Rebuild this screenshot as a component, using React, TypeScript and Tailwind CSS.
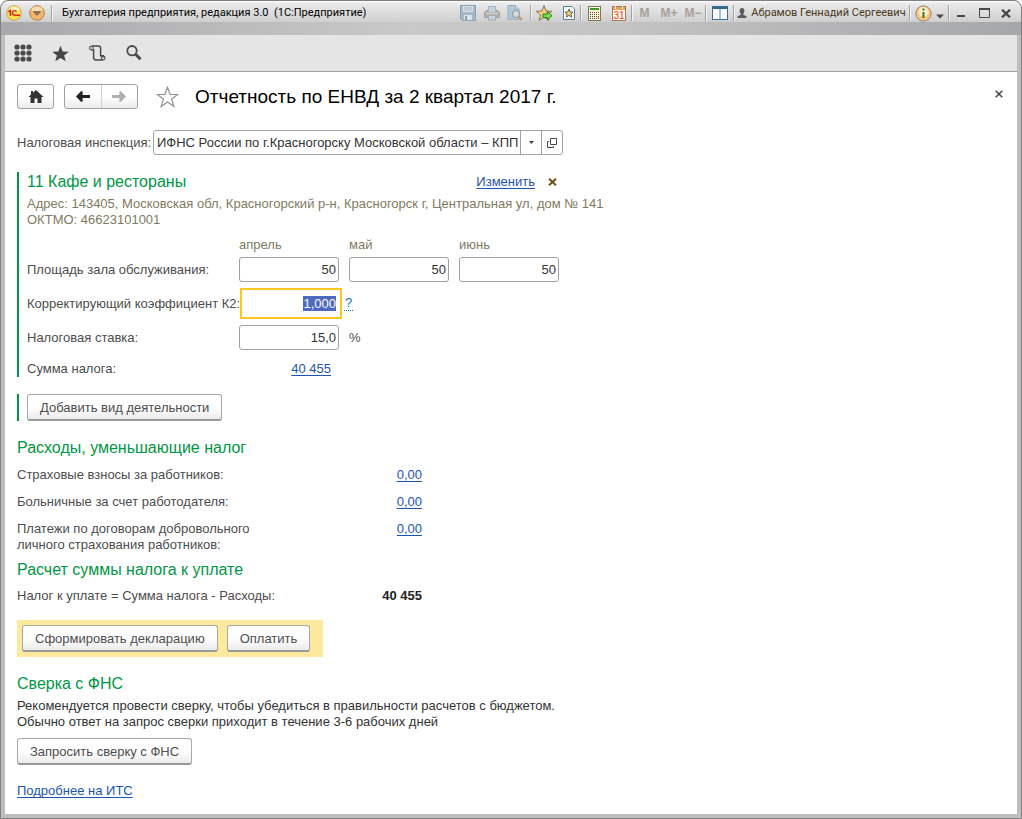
import { useEffect, useRef } from "react";
import type { ReactNode } from "react";

const STAR = "M8 0.6 L10.1 6 L15.8 6.3 L11.4 9.9 L12.9 15.4 L8 12.3 L3.1 15.4 L4.6 9.9 L0.2 6.3 L5.9 6 Z";

function Separator() {
  return <span className="h-4 w-px shrink-0 bg-[#a2a2a2] shadow-[1px_0_0_#f4f4f4]" />;
}

function BarButton({ label, className, children }: { label: string; className: string; children: ReactNode }) {
  return (
    <button type="button" aria-label={label} className={`flex h-5 shrink-0 items-center justify-center ${className}`}>
      {children}
    </button>
  );
}

function SaveIcon() {
  return (
    <svg width="16" height="16" viewBox="0 0 16 16">
      <path d="M0.5 0.5H15.5V15.5H2L0.5 14Z" fill="#a3b9c8" stroke="#88a3b5" />
      <rect x="3" y="1" width="10" height="6" fill="#d9e0e4" />
      <path d="M4 3H12M4 5H12" stroke="#a5b4be" />
      <rect x="4" y="10" width="8" height="5" fill="#dde3e7" />
      <rect x="5" y="11" width="2" height="4" fill="#8ba4b5" />
    </svg>
  );
}

function PrintIcon() {
  return (
    <svg width="16" height="16" viewBox="0 0 16 16">
      <path d="M2.5 5.5H13.5L15.5 8V12.5H0.5V8Z" fill="#b8b2ac" stroke="#a39d98" />
      <rect x="4.5" y="1.5" width="7" height="6" fill="#c3d3de" stroke="#a7b5c0" />
      <rect x="4.5" y="10.5" width="7" height="4.5" fill="#c3d3de" stroke="#a5abb1" />
      <path d="M2 8.5H14" stroke="#d9d4cf" />
    </svg>
  );
}

function PreviewIcon() {
  return (
    <svg width="16" height="16" viewBox="0 0 16 16">
      <path d="M1 0.5H8.5L12 4V14.5H1Z" fill="#b0c8d7" stroke="#9ab0bf" />
      <path d="M8.5 0.5V4H12" fill="#e2e9ed" stroke="#9ab0bf" />
      <circle cx="9" cy="9" r="3.5" fill="#cfdbe2" stroke="#a09c98" strokeWidth="1.2" />
      <path d="M11.6 11.6L15 15" stroke="#b39c90" strokeWidth="2.4" />
    </svg>
  );
}

function StarArrowIcon() {
  return (
    <svg width="17" height="16" viewBox="0 0 17 16">
      <path d={STAR} fill="#f7cf7c" stroke="#85765c" />
      <path d="M7 9H11.5V6.5L16 10.7L11.5 15V12.5H7Z" fill="#7ddb52" stroke="#27801c" />
    </svg>
  );
}

function PageStarIcon() {
  return (
    <svg width="14" height="16" viewBox="0 0 14 16">
      <path d="M1.5 1.5H10L12.5 4V14.5H1.5Z" fill="#f8fbfd" stroke="#56829b" />
      <path d="M7 4L8.2 6.9L11 7.1L8.9 9.1L9.6 12L7 10.4L4.4 12L5.1 9.1L3 7.1L5.8 6.9Z" fill="#f7cf74" stroke="#5f5443" strokeWidth="0.9" />
    </svg>
  );
}

function CalculatorIcon() {
  return (
    <svg width="13" height="15" viewBox="0 0 13 15">
      <rect x="0.5" y="0.5" width="12" height="14" fill="#fdf6d8" stroke="#7d7560" />
      <rect x="2" y="2" width="9" height="2" fill="#399b2a" />
      <path d="M2 6.5H10M2 8.5H10M2 10.5H10M2 12.5H10" stroke="#4b463a" strokeDasharray="1 1" />
      <path d="M10.5 6V7M10.5 8V9M10.5 10V13" stroke="#e2442a" />
    </svg>
  );
}

function CalendarIcon() {
  return (
    <svg width="14" height="16" viewBox="0 0 14 16">
      <rect x="0.5" y="1.5" width="13" height="14" fill="#fff7ea" stroke="#9d7a5a" />
      <rect x="1" y="2" width="12" height="3" fill="#e7a15c" />
      <path d="M3.5 1V4M10.5 1V4" stroke="#fff3e0" />
      <text x="7" y="13.5" textAnchor="middle" fontSize="10" fill="#e23a1c" fontFamily="Liberation Sans, sans-serif">
        31
      </text>
    </svg>
  );
}

function PanelsIcon() {
  return (
    <svg width="16" height="14" viewBox="0 0 16 14">
      <rect x="0.5" y="0.5" width="15" height="13" fill="#f6fafc" stroke="#40718d" />
      <rect x="1" y="1" width="14" height="2" fill="#2d6888" />
      <path d="M8 3V13" stroke="#5a89a2" />
    </svg>
  );
}

function TitleBar() {
  return (
    <header className="flex h-[34px] items-start rounded-t-lg bg-[linear-gradient(to_bottom,#fbfbfb_0px,#e9e9e9_3px,#cfcfcf_21px,transparent_21px),linear-gradient(to_right,#a9a9ac,#c9c9c9_40%,#c4c4c4_60%,#a6a7aa)] px-1 pt-0.5 font-[Roboto,sans-serif] text-[11px] leading-5 text-black">
      <BarButton label="1С" className="w-[18px]">
        <svg width="16" height="16" viewBox="0 0 16 16">
          <circle cx="8" cy="8" r="7.3" fill="#fbdd51" stroke="#caa85c" />
          <ellipse cx="8" cy="4.5" rx="5.5" ry="3" fill="#fff2b0" />
          <path d="M2.3 6.6L4.4 5.4V10.8" fill="none" stroke="#d8231b" strokeWidth="1.6" />
          <path d="M10.6 6.6A2.3 2.3 0 1 0 8.7 10.2H14" fill="none" stroke="#d8231b" strokeWidth="1.4" />
        </svg>
      </BarButton>
      <BarButton label="Главное меню" className="ml-1.5 w-4">
        <svg width="16" height="16" viewBox="0 0 16 16">
          <circle cx="8" cy="8" r="7.3" fill="#f5b868" stroke="#a98558" />
          <ellipse cx="8" cy="4.6" rx="5.6" ry="3.2" fill="#fbdcae" />
          <path d="M3.6 6.2H12.4L8 10.8Z" fill="#6b5237" />
          <path d="M5.4 7.2H10.6L8 9.8Z" fill="#fff" opacity="0.3" />
        </svg>
      </BarButton>
      <div className="ml-1.5 flex h-5 items-center">
        <Separator />
      </div>
      <span className="ml-2.5 whitespace-pre">Бухгалтерия предприятия, редакция 3.0  (1С:Предприятие)</span>
      <div className="ml-auto flex h-5 items-center">
        <BarButton label="Сохранить" className="w-6"><SaveIcon /></BarButton>
        <BarButton label="Печать" className="w-6"><PrintIcon /></BarButton>
        <BarButton label="Просмотр" className="w-[22px]"><PreviewIcon /></BarButton>
        <span className="w-1" />
        <Separator />
        <BarButton label="Добавить в избранное" className="w-[27px]"><StarArrowIcon /></BarButton>
        <BarButton label="Избранное" className="w-[22px]"><PageStarIcon /></BarButton>
        <Separator />
        <BarButton label="Калькулятор" className="w-[26px]"><CalculatorIcon /></BarButton>
        <BarButton label="Календарь" className="w-6"><CalendarIcon /></BarButton>
        <Separator />
        <div className="flex font-['Liberation_Sans',sans-serif] text-[12px] font-bold text-[#a89f98]">
          <button type="button" className="h-5 w-[25px]">M</button>
          <button type="button" className="h-5 w-6">M+</button>
          <button type="button" className="h-5 w-6">M−</button>
        </div>
        <Separator />
        <BarButton label="Панели" className="w-[27px]"><PanelsIcon /></BarButton>
        <Separator />
        <button type="button" className="flex h-5 w-[175px] items-center justify-center gap-1 whitespace-nowrap text-[#47391a]">
          <svg width="10" height="10" viewBox="0 0 10 10" fill="#5a5a5a">
            <ellipse cx="5" cy="3" rx="2.4" ry="3" />
            <path d="M0.5 10V8.2L3.8 6.8V5H6.2V6.8L9.5 8.2V10Z" />
          </svg>
          Абрамов Геннадий Сергеевич
        </button>
        <Separator />
        <BarButton label="Информация" className="ml-1 w-[18px]">
          <svg width="17" height="17" viewBox="0 0 17 17">
            <circle cx="8.5" cy="8.5" r="7.6" fill="#f6c67c" stroke="#8f8576" />
            <circle cx="8.5" cy="7" r="5" fill="#fdebc9" />
            <path d="M8.5 3.5V5.5M8.5 7V13" stroke="#2f7d2a" strokeWidth="2" />
          </svg>
        </BarButton>
        <BarButton label="Ещё" className="w-4 pt-1.5">
          <svg width="8" height="5" viewBox="0 0 8 5"><path d="M0 0.5H8L4 4.5Z" fill="#4a4a4a" /></svg>
        </BarButton>
        <Separator />
        <BarButton label="Свернуть" className="w-6 pt-1.5">
          <svg width="8" height="3" viewBox="0 0 8 3"><rect width="8" height="2" fill="#4a4a4a" /></svg>
        </BarButton>
        <BarButton label="Развернуть" className="w-[22px]">
          <svg width="11" height="10" viewBox="0 0 11 10"><path d="M0.5 1H10.5V9.5H0.5Z" fill="none" stroke="#4a4a4a" /><rect width="11" height="2" fill="#4a4a4a" /></svg>
        </BarButton>
        <BarButton label="Закрыть" className="w-[22px]">
          <svg width="10" height="9" viewBox="0 0 10 9"><path d="M1 0.7L9 8.3M9 0.7L1 8.3" stroke="#454545" strokeWidth="2.3" /></svg>
        </BarButton>
      </div>
    </header>
  );
}

function Toolbar() {
  const dots = [3, 9, 15];
  return (
    <nav className="flex h-[37px] items-center border-b border-[#a0a0a0] bg-[#e5e5e5] pl-[9px]">
      <button type="button" aria-label="Меню" className="w-[18px]">
        <svg width="18" height="18" viewBox="0 0 18 18" fill="#4a4a4a">
          {dots.map((y) => dots.map((x) => <circle key={`${x}-${y}`} cx={x} cy={y} r="2.6" />))}
        </svg>
      </button>
      <button type="button" aria-label="Избранное" className="ml-5 w-[17px]">
        <svg width="17" height="17" viewBox="0 0 16 16" fill="#454545"><path d={STAR} /></svg>
      </button>
      <button type="button" aria-label="История" className="ml-5 w-[17px]">
        <svg width="17" height="16" viewBox="0 0 17 16" fill="none" stroke="#4a4a4a" strokeWidth="1.5">
          <path d="M2.5 0.9H9.2Q11.6 0.9 11.6 3V10.7H14.2V12.5" />
          <path d="M2.6 5.1H4.6V12.5Q4.6 14.9 7 14.9H14" />
          <circle cx="2.4" cy="3" r="1.8" strokeWidth="1.1" />
          <circle cx="14.2" cy="12.9" r="1.8" strokeWidth="1.1" />
        </svg>
      </button>
      <button type="button" aria-label="Поиск" className="ml-5 w-4">
        <svg width="16" height="16" viewBox="0 0 16 16" fill="none" stroke="#4a4a4a">
          <circle cx="6" cy="5.7" r="4.7" strokeWidth="1.8" />
          <path d="M9.6 9.3L14.5 14.2" strokeWidth="3" />
        </svg>
      </button>
    </nav>
  );
}

function PageHeader() {
  return (
    <div className="flex h-[25px] items-center">
      <button
        type="button"
        aria-label="Начальная страница"
        className="flex h-[25px] w-[37px] items-center justify-center rounded-[3px] border border-[#a0a0a0] bg-linear-to-b from-white from-50% to-[#ebebeb]"
      >
        <svg width="16" height="13" viewBox="0 0 16 13" fill="#333">
          <path d="M8 0L15.5 7H13.5V13H9.5V8.5H6.5V13H2.5V7H0.5L3 4.5V1H5V2.7Z" />
        </svg>
      </button>
      <div className="ml-2.5 flex h-[25px] w-[74px] rounded-[3px] border border-[#a0a0a0] bg-linear-to-b from-white from-50% to-[#ebebeb]">
        <button type="button" aria-label="Назад" className="flex flex-1 items-center justify-center">
          <svg width="14" height="11" viewBox="0 0 14 11"><path d="M0 5.5L5 0.3H6.6V4H14V7H6.6V10.7H5Z" fill="#222" /></svg>
        </button>
        <button type="button" aria-label="Вперёд" className="flex flex-1 items-center justify-center border-l border-[#cfcfcf]">
          <svg width="14" height="11" viewBox="0 0 14 11"><path d="M14 5.5L9 0.3H7.4V4H0V7H7.4V10.7H9Z" fill="#b0b0b0" /></svg>
        </button>
      </div>
      <button type="button" aria-label="В избранное" className="ml-[18px] w-[23px]">
        <svg width="23" height="22" viewBox="0 0 23 22">
          <path d="M11.5 1.2L14 8.3L21.8 8.5L15.6 13.1L17.9 20.5L11.5 16.1L5.1 20.5L7.4 13.1L1.2 8.5L9 8.3Z" fill="#fff" stroke="#929292" strokeWidth="1.2" />
        </svg>
      </button>
      <h1 className="ml-4 text-[19px] leading-6 text-black">Отчетность по ЕНВД за 2 квартал 2017 г.</h1>
      <button type="button" aria-label="Закрыть форму" className="-mr-1 mb-1.5 ml-auto p-1.5">
        <svg width="8" height="8" viewBox="0 0 8 8"><path d="M0.7 0.7L7.3 7.3M7.3 0.7L0.7 7.3" stroke="#444" strokeWidth="1.5" /></svg>
      </button>
    </div>
  );
}

const linkClass = "text-[#1b55b0] underline decoration-1 underline-offset-2 [text-decoration-skip-ink:none]";
const fieldClass = "h-[25px] w-[100px] rounded-[3px] border border-[#a0a0a0] bg-white px-0.5 text-right leading-4 text-[#333] outline-none";

function PushButton({ children }: { children: ReactNode }) {
  return (
    <button
      type="button"
      className="h-[27px] rounded-[3px] border border-b-2 border-[#a8a8a8] border-b-[#999] bg-linear-to-b from-white from-50% to-[#ebebeb] px-3 pt-px leading-4 text-[#4d4d4d]"
    >
      {children}
    </button>
  );
}

function SectionTitle({ children }: { children: ReactNode }) {
  return <h2 className="text-[16px] leading-5 text-[#009646]">{children}</h2>;
}

function Activity() {
  const k2 = useRef<HTMLInputElement>(null);
  useEffect(() => {
    k2.current?.focus();
    k2.current?.select();
  }, []);
  const months = [
    { id: "april", name: "апрель" },
    { id: "may", name: "май" },
    { id: "june", name: "июнь" },
  ];
  return (
    <section className="mt-[17px] border-l-2 border-[#009646] pl-2">
      <div className="flex w-[530px] items-center">
        <SectionTitle>11 Кафе и рестораны</SectionTitle>
        <a href="#edit" className={`ml-auto ${linkClass}`}>Изменить</a>
        <button type="button" aria-label="Удалить" className="ml-[13px]">
          <svg width="9" height="8" viewBox="0 0 9 8"><path d="M1 0.7L8 7.3M8 0.7L1 7.3" stroke="#6f5316" strokeWidth="2" /></svg>
        </button>
      </div>
      <p className="mt-1 text-[#7f7a5f]">
        Адрес: 143405, Московская обл, Красногорский р-н, Красногорск г, Центральная ул, дом № 141
        <br />
        ОКТМО: 46623101001
      </p>
      <div className="mt-[9px] grid grid-cols-[202px_100px_100px_100px] items-center gap-x-2.5">
        <span />
        {months.map((m) => (
          <label key={m.id} htmlFor={m.id} className="mb-1 text-[#7f7a5f]">{m.name}</label>
        ))}
        <span>Площадь зала обслуживания:</span>
        {months.map((m) => (
          <input key={m.id} id={m.id} defaultValue="50" className={fieldClass} />
        ))}
      </div>
      <div className="mt-1.5 flex h-[31px] items-center">
        <div className="flex w-[315px] items-center">
          <label htmlFor="k2" className="whitespace-nowrap">Корректирующий коэффициент К2:</label>
          <input
            id="k2"
            ref={k2}
            defaultValue="1,000"
            className="h-[31px] min-w-0 flex-1 border-2 border-[#fac821] bg-white px-1 text-right leading-4 text-[#333] outline-none selection:bg-[#4f69c0] selection:text-white"
          />
        </div>
        <button type="button" className="ml-0.5 border-b border-dotted border-[#0a78b4] px-px leading-[14px] text-[#0a78b4]">?</button>
      </div>
      <div className="mt-1.5 flex h-[25px] items-center">
        <label htmlFor="rate" className="w-[212px]">Налоговая ставка:</label>
        <input id="rate" defaultValue="15,0" className={fieldClass} />
        <span className="ml-2.5">%</span>
      </div>
      <div className="mt-[11px] flex w-[304px] items-center justify-between">
        <span>Сумма налога:</span>
        <a href="#tax" className={linkClass}>40 455</a>
      </div>
    </section>
  );
}

export default function App() {
  const expenses = [
    { id: "insurance", name: "Страховые взносы за работников:" },
    { id: "sick", name: "Больничные за счет работодателя:" },
    { id: "voluntary", name: "Платежи по договорам добровольного личного страхования работников:" },
  ];
  return (
    <div className="flex min-h-screen flex-col rounded-t-lg border border-[#808080] bg-[#bebebe] font-['Liberation_Sans',Arial,sans-serif] text-[13px] leading-4 text-[#4d4d4d]">
      <TitleBar />
      <div className="mx-1 mb-1 flex flex-1 flex-col bg-white">
        <Toolbar />
        <main className="flex-1 px-3 pt-3 pb-[15px]">
          <PageHeader />
          <div className="mt-[21px] flex h-[25px] items-center">
            <label htmlFor="office" className="w-[136px] whitespace-nowrap">Налоговая инспекция:</label>
            <div className="flex h-[25px] w-[410px] rounded-[3px] border border-[#a0a0a0]">
              <input
                id="office"
                defaultValue="ИФНС России по г.Красногорску Московской области – КПП 502401001"
                className="min-w-0 flex-1 pl-[3px] leading-4 text-[#333] outline-none"
              />
              <button type="button" aria-label="Выбрать" className="ml-0.5 flex w-[21px] items-center justify-center border-l border-[#a0a0a0]">
                <svg width="5" height="3" viewBox="0 0 5 3"><path d="M0 0H5L2.5 3Z" fill="#444" /></svg>
              </button>
              <button type="button" aria-label="Открыть" className="flex w-[21px] items-center justify-center border-l border-[#a0a0a0]">
                <svg width="10" height="10" viewBox="0 0 10 10" fill="none" stroke="#444"><path d="M3.5 0.5H9.5V6.5H3.5Z M2 3.5H0.5V9.5H6.5V8" /></svg>
              </button>
            </div>
          </div>
          <Activity />
          <div className="mt-[17px] border-l-2 border-[#009646] pl-2">
            <PushButton>Добавить вид деятельности</PushButton>
          </div>
          <section className="mt-[17px]">
            <SectionTitle>Расходы, уменьшающие налог</SectionTitle>
            <div className="mt-[9px] flex w-[405px] flex-col gap-[11px]">
              {expenses.map((e) => (
                <div key={e.id} className="flex items-start justify-between">
                  <span className="w-[250px]">{e.name}</span>
                  <a href={`#${e.id}`} className={linkClass}>0,00</a>
                </div>
              ))}
            </div>
          </section>
          <section className="mt-[7px]">
            <SectionTitle>Расчет суммы налога к уплате</SectionTitle>
            <div className="mt-2 flex w-[405px] justify-between">
              <span>Налог к уплате = Сумма налога - Расходы:</span>
              <b className="text-[#222]">40 455</b>
            </div>
          </section>
          <div className="mt-4 flex h-[37px] w-[306px] items-center gap-[9px] bg-[#fce99e] pl-[5px]">
            <PushButton>Сформировать декларацию</PushButton>
            <PushButton>Оплатить</PushButton>
          </div>
          <section className="mt-[17px]">
            <SectionTitle>Сверка с ФНС</SectionTitle>
            <p className="mt-1 mb-2 text-[#333]">
              Рекомендуется провести сверку, чтобы убедиться в правильности расчетов с бюджетом.
              <br />
              Обычно ответ на запрос сверки приходит в течение 3-6 рабочих дней
            </p>
            <PushButton>Запросить сверку с ФНС</PushButton>
          </section>
          <div className="mt-[18px] flex">
            <a href="#its" className={linkClass}>Подробнее на ИТС</a>
          </div>
        </main>
      </div>
    </div>
  );
}
